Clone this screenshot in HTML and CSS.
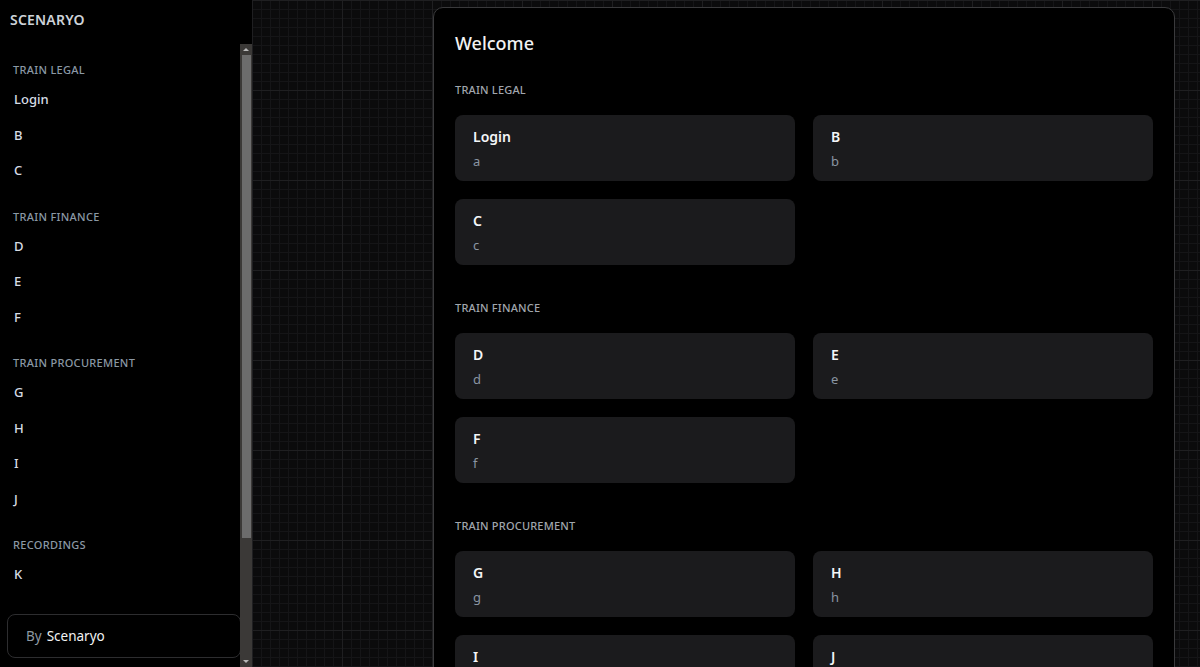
FILE: index.html
```html
<!DOCTYPE html>
<html lang="en">
<head>
  <meta charset="UTF-8" />
  <title>Scenaryo</title>
  <meta name="viewport" content="width=device-width, initial-scale=1.0" />
  <link rel="stylesheet" href="styles.css">
</head>
<body>
  <aside class="sidebar">
    <div class="brand">SCENARYO</div>
    <div class="sidebar-body">
      <nav class="nav">
        <div class="group">
          <div class="group-label">Train Legal</div>
          <a class="nav-item" href="#">Login</a>
          <a class="nav-item" href="#">B</a>
          <a class="nav-item" href="#">C</a>
        </div>
        <div class="group">
          <div class="group-label">Train Finance</div>
          <a class="nav-item" href="#">D</a>
          <a class="nav-item" href="#">E</a>
          <a class="nav-item" href="#">F</a>
        </div>
        <div class="group">
          <div class="group-label">Train Procurement</div>
          <a class="nav-item" href="#">G</a>
          <a class="nav-item" href="#">H</a>
          <a class="nav-item" href="#">I</a>
          <a class="nav-item" href="#">J</a>
        </div>
        <div class="group">
          <div class="group-label">Recordings</div>
          <a class="nav-item" href="#">K</a>
        </div>
        <div class="footer">
          <span class="by">By</span> <span class="name">Scenaryo</span>
        </div>
      </nav>
      <!-- scrollbar of the nav list -->
      <div class="scrollbar">
        <div class="sb-btn"><span class="arrow-up"></span></div>
        <div class="sb-thumb"></div>
        <div class="sb-space"></div>
        <div class="sb-btn"><span class="arrow-down"></span></div>
      </div>
    </div>
  </aside>

  <main class="main">
    <div class="panel">
      <h1>Welcome</h1>

      <section class="section">
        <div class="section-label">Train Legal</div>
        <div class="cards">
          <a class="card" href="#"><div class="card-title">Login</div><div class="card-sub">a</div></a>
          <a class="card" href="#"><div class="card-title">B</div><div class="card-sub">b</div></a>
          <a class="card" href="#"><div class="card-title">C</div><div class="card-sub">c</div></a>
        </div>
      </section>

      <section class="section">
        <div class="section-label">Train Finance</div>
        <div class="cards">
          <a class="card" href="#"><div class="card-title">D</div><div class="card-sub">d</div></a>
          <a class="card" href="#"><div class="card-title">E</div><div class="card-sub">e</div></a>
          <a class="card" href="#"><div class="card-title">F</div><div class="card-sub">f</div></a>
        </div>
      </section>

      <section class="section">
        <div class="section-label">Train Procurement</div>
        <div class="cards">
          <a class="card" href="#"><div class="card-title">G</div><div class="card-sub">g</div></a>
          <a class="card" href="#"><div class="card-title">H</div><div class="card-sub">h</div></a>
          <a class="card" href="#"><div class="card-title">I</div><div class="card-sub">i</div></a>
          <a class="card" href="#"><div class="card-title">J</div><div class="card-sub">j</div></a>
        </div>
      </section>

      <section class="section">
        <div class="section-label">Recordings</div>
        <div class="cards">
          <a class="card" href="#"><div class="card-title">K</div><div class="card-sub">k</div></a>
        </div>
      </section>
    </div>
  </main>
</body>
</html>
```

FILE: styles.css
```css
* {
  box-sizing: border-box;
}

body {
  margin: 0;
  height: 100vh;
  display: flex;
  overflow: hidden;
  background: #000;
  color: #e8e8e8;
  font-family: "Segoe UI", "Noto Sans", sans-serif;
}

a {
  text-decoration: none;
  color: inherit;
}

/* sidebar */

.sidebar {
  width: 252px;
  flex-shrink: 0;
  display: flex;
  flex-direction: column;
  background: #000;
}

.brand {
  height: 44px;
  padding: 10px 10px 0;
  font-size: 14px;
  font-weight: 600;
  line-height: 19px;
  color: #cdd2d8;
  letter-spacing: 0.2px;
}

.sidebar-body {
  flex: 1;
  display: flex;
  min-height: 0;
}

.nav {
  width: 240px;
  overflow: hidden;
  padding-top: 18px;
}

.group {
  margin-bottom: 20px;
}

.group-label {
  padding-left: 13px;
  font-size: 11px;
  font-weight: 500;
  line-height: 16px;
  letter-spacing: 0.3px;
  text-transform: uppercase;
  color: #8b98a5;
  margin-bottom: 4px;
}

.nav-item {
  display: block;
  padding-left: 14px;
  font-size: 13px;
  font-weight: 500;
  line-height: 35.5px;
  color: #d6dde5;
}

.footer {
  margin: 21px -1px 0 7px;
  height: 44px;
  border: 1px solid #2d2d2f;
  border-radius: 8px;
  padding-left: 18px;
  display: flex;
  align-items: center;
  gap: 5px;
  font-size: 13.5px;
}

.footer .by {
  color: #8e98a3;
}

.footer .name {
  color: #f2f2f2;
}

.scrollbar {
  width: 12px;
  display: flex;
  flex-direction: column;
  background: #3b3937;
}

.sb-btn {
  height: 11px;
  display: flex;
  align-items: center;
  justify-content: center;
}

.arrow-up {
  border-left: 3px solid transparent;
  border-right: 3px solid transparent;
  border-bottom: 3px solid #b8b8b8;
}

.arrow-down {
  border-left: 3px solid transparent;
  border-right: 3px solid transparent;
  border-top: 3px solid #b8b8b8;
}

.sb-thumb {
  height: 483px;
  margin: 0 1px 0 2px;
  background: #6c6c6c;
}

.sb-space {
  flex: 1;
}

/* main area */

.main {
  flex: 1;
  display: flex;
  justify-content: flex-end;
  padding: 7px 25px 0 0;
  background-color: #0b0b0c;
  background-image:
    linear-gradient(#1f1f21 1px, transparent 1px),
    linear-gradient(90deg, #1f1f21 1px, transparent 1px),
    linear-gradient(#151517 1px, transparent 1px),
    linear-gradient(90deg, #151517 1px, transparent 1px);
  background-size: 90px 90px, 90px 90px, 9px 9px, 9px 9px;
}

.panel {
  width: 742px;
  align-self: flex-start;
  background: #000;
  border: 1px solid #3a3a3c;
  border-radius: 10px;
  padding: 23px 21px 30px;
}

h1 {
  margin: 0 0 27px;
  font-size: 18px;
  font-weight: 500;
  line-height: 24px;
  color: #f2f2f2;
}

.section {
  margin-bottom: 35px;
}

.section-label {
  font-size: 11px;
  font-weight: 500;
  line-height: 16px;
  letter-spacing: 0.2px;
  text-transform: uppercase;
  color: #a1a6ad;
  margin-bottom: 17px;
}

.cards {
  display: grid;
  grid-template-columns: 1fr 1fr;
  gap: 18px;
}

.card {
  display: block;
  height: 66px;
  background: #1b1b1d;
  border-radius: 8px;
  padding: 12px 18px 10px;
}

.card-title {
  font-size: 14px;
  font-weight: 600;
  line-height: 20px;
  color: #f4f6f8;
  margin-bottom: 5px;
}

.card-sub {
  font-size: 13px;
  line-height: 18px;
  color: #8a95a2;
}
```
